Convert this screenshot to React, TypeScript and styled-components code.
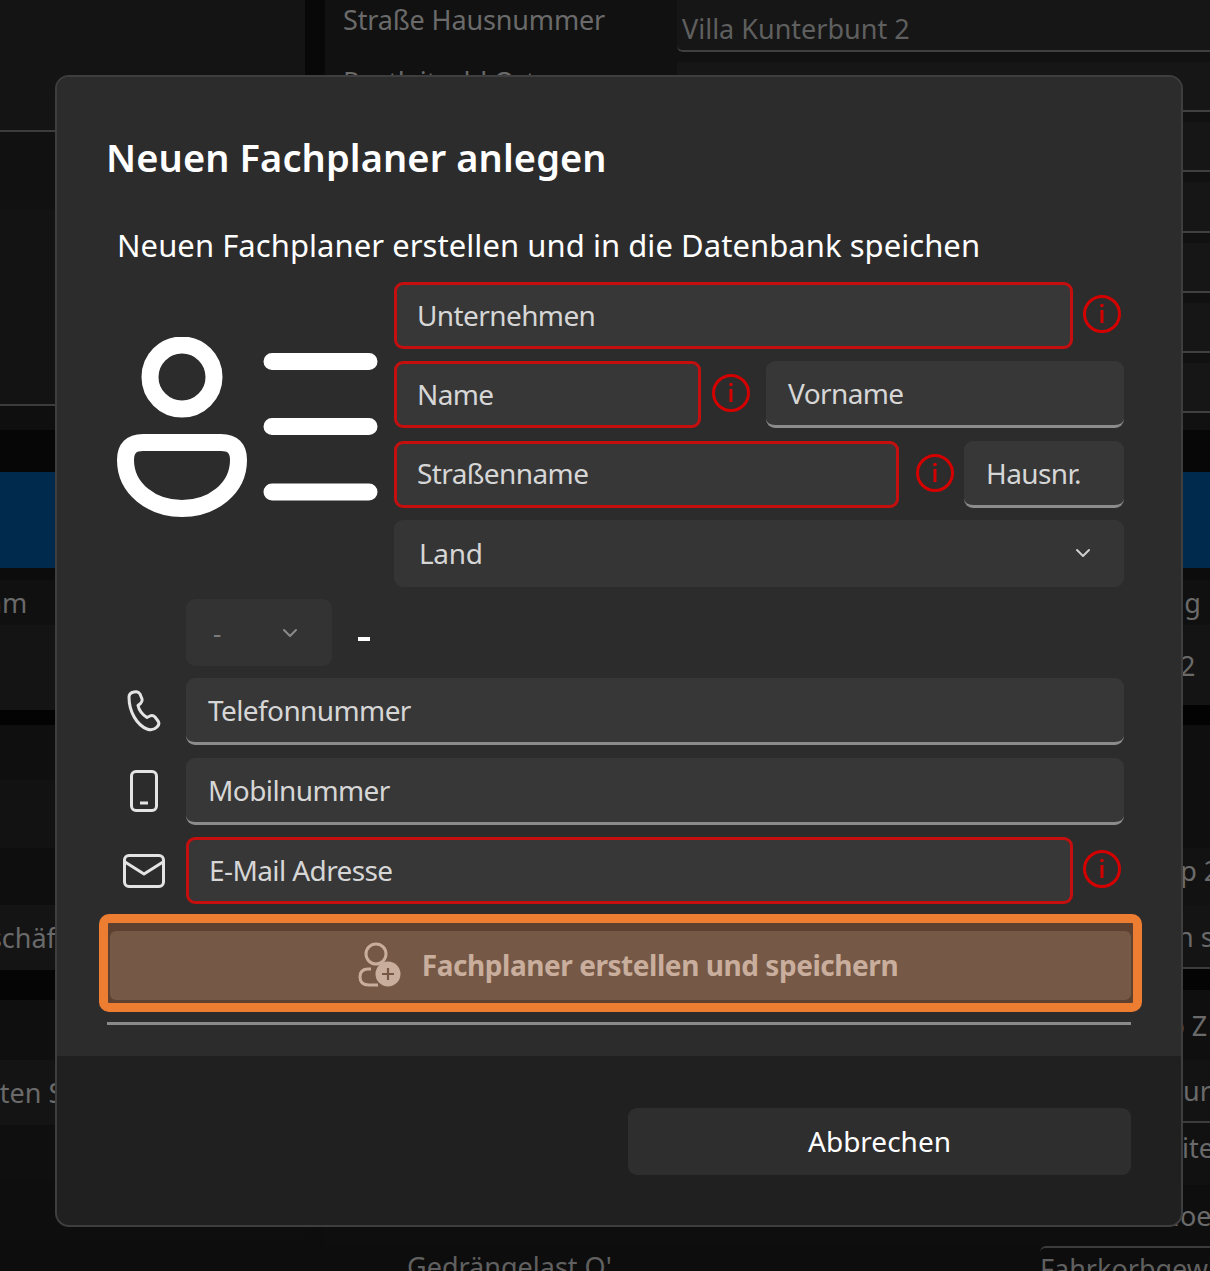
import React from 'react';
import styled, { createGlobalStyle } from 'styled-components';
import { ChevronDown } from 'lucide-react';

const GlobalStyle = createGlobalStyle`
  html, body {
    margin: 0;
    padding: 0;
    background: #0d0d0d;
  }
  * {
    box-sizing: border-box;
  }
`;

interface RowData {
  height: number;
  tone: string;
  text?: string;
  indent?: number;
  line?: boolean;
}

const leftRows: RowData[] = [
  { height: 132, tone: '#141414', line: true },
  { height: 78, tone: '#111111' },
  { height: 196, tone: '#131313', line: true },
  { height: 24, tone: '#0f0f0f' },
  { height: 42, tone: '#060606' },
  { height: 96, tone: '#002a4d' },
  { height: 12, tone: '#0c0c0c' },
  { height: 45, tone: '#101010', text: 'Programm', indent: 91 },
  { height: 85, tone: '#141414' },
  { height: 15, tone: '#030303' },
  { height: 55, tone: '#0f0f0f' },
  { height: 68, tone: '#121212' },
  { height: 57, tone: '#0e0e0e' },
  { height: 65, tone: '#141414', text: 'Geschäftsbereich', indent: 154 },
  { height: 30, tone: '#050505' },
  { height: 60, tone: '#0f0f0f' },
  { height: 65, tone: '#141414', text: 'Daten Stand', indent: 165 },
  { height: 55, tone: '#0f0f0f' },
  { height: 60, tone: '#0e0e0e' },
  { height: 31, tone: '#0d0d0d' },
];

const rightRows: RowData[] = [
  { height: 42, tone: '#070707' },
  { height: 96, tone: '#002a4d' },
  { height: 12, tone: '#0c0c0c' },
  { height: 45, tone: '#101010', text: 'Steuerung', indent: 743 },
  { height: 80, tone: '#141414', text: '2', indent: 855 },
  { height: 20, tone: '#030303' },
  { height: 123, tone: '#0f0f0f' },
  { height: 44, tone: '#121212', text: 'Typ 2', indent: 827 },
  { height: 13, tone: '#121212' },
  { height: 64, tone: '#141414', text: 'in s', indent: 845, line: true },
  { height: 21, tone: '#040404' },
  { height: 70, tone: '#0f0f0f', text: 'Typ Z', indent: 815 },
  { height: 63, tone: '#131313', text: 'Flur', indent: 837, line: true },
  { height: 48, tone: '#111111', text: 'Seite', indent: 827 },
  { height: 14, tone: '#111111' },
  { height: 61, tone: '#0e0e0e', text: 'Hoe', indent: 835 },
];

const labelRows = ['Straße Hausnummer', 'Postleitzahl Ort', '', '', '', '', ''];

const InfoIcon = ({ before, after = 0 }: { before: number; after?: number }) => (
  <InfoSvg viewBox="0 0 40 40" width="40" height="40" $before={before} $after={after}>
    <circle cx="20" cy="20" r="17.5" fill="none" stroke="#d40000" strokeWidth="3" />
    <circle cx="20" cy="11.5" r="1.8" fill="#d40000" />
    <path d="M20 16v13" stroke="#d40000" strokeWidth="3" fill="none" />
  </InfoSvg>
);

const PersonListIcon = () => (
  <svg viewBox="0 0 261 180" width="261" height="180" fill="none" stroke="#fff" strokeWidth="17" strokeLinecap="round">
    <circle cx="65" cy="40" r="32" />
    <path d="M26 105.5H104Q121.5 105.5 121.5 123C121.5 152 95 171.5 65 171.5C35 171.5 8.5 152 8.5 123Q8.5 105.5 26 105.5Z" />
    <path d="M155 24.5H252M155 89.5H252M155 155H252" />
  </svg>
);

const PhoneIcon = () => (
  <svg viewBox="0 0 36 44" width="36" height="44" fill="none" stroke="#e4e4e4" strokeWidth="3" strokeLinejoin="round">
    <path d="M3 7C3 4 5 2.5 8 2L10 1.7C12 1.5 13 2.5 14 4L16 9C16.5 11 16 12 14.5 13.5L12 15.5C13 20 17 25 21 27.5L24 26C26 25 27.5 25.5 29 27L32 31C33.5 33 33 35 31 37C28 40 25 40.5 21 39C11 35 3 22 3 7Z" />
  </svg>
);

const MobileIcon = () => (
  <svg viewBox="0 0 30 44" width="30" height="44" fill="none" stroke="#e4e4e4" strokeWidth="3">
    <rect x="2.5" y="2.5" width="25" height="39" rx="4.5" />
    <path d="M11 34H19" />
  </svg>
);

const MailIcon = () => (
  <svg viewBox="0 0 44 36" width="44" height="36" fill="none" stroke="#e4e4e4" strokeWidth="3" strokeLinejoin="round">
    <rect x="2.5" y="2.5" width="39" height="31" rx="4.5" />
    <path d="M3 9L22 21L41 9" />
  </svg>
);

const AddPersonIcon = () => (
  <svg viewBox="0 0 44 46" width="44" height="46" fill="none" stroke="#c9ae9d" strokeWidth="3">
    <circle cx="18" cy="12" r="10" />
    <path d="M13 27H10Q2 27 2 35Q2 43 11 43H20" />
    <circle cx="30" cy="32" r="12.5" fill="#c9ae9d" stroke="none" />
    <path d="M30 26V38M24 32H36" stroke="#755846" strokeWidth="2.2" />
  </svg>
);

export default function App() {
  return (
    <Page>
      <GlobalStyle />
      <Backdrop>
        <LeftPane>
          {leftRows.map((row, i) => (
            <BackRow key={i} $height={row.height} $tone={row.tone} $line={row.line} $indent={row.indent}>
              {row.text}
            </BackRow>
          ))}
        </LeftPane>
        <Gutter />
        <RightPane>
          <FormRows>
            {labelRows.map((label, i) => (
              <FormRow key={i}>
                <FormLabel>{label}</FormLabel>
                <ValueBox>{i === 0 ? 'Villa Kunterbunt 2' : ''}</ValueBox>
              </FormRow>
            ))}
          </FormRows>
          {rightRows.map((row, i) => (
            <BackRow key={i} $height={row.height} $tone={row.tone} $line={row.line} $indent={row.indent}>
              {row.text}
            </BackRow>
          ))}
          <BottomLabels>
            <BottomLabel>Gedrängelast Q'</BottomLabel>
            <BoxedLabel>Fahrkorbgewicht</BoxedLabel>
          </BottomLabels>
        </RightPane>
      </Backdrop>

      <Modal>
        <ModalBody>
          <Title>Neuen Fachplaner anlegen</Title>
          <Subtitle>Neuen Fachplaner erstellen und in die Datenbank speichen</Subtitle>

          <TopBlock>
            <PersonColumn>
              <PersonListIcon />
            </PersonColumn>
            <FieldColumn>
              <FieldRow>
                <Field $invalid $width={679}>Unternehmen</Field>
                <InfoIcon before={9} />
              </FieldRow>
              <FieldRow>
                <Field $invalid $width={307}>Name</Field>
                <InfoIcon before={10} after={15} />
                <Field $grow>Vorname</Field>
              </FieldRow>
              <FieldRow>
                <Field $invalid $width={505}>Straßenname</Field>
                <InfoIcon before={16} after={9} />
                <Field $grow>Hausnr.</Field>
              </FieldRow>
              <Select>
                Land
                <ChevronDown size={24} color="#cfcfcf" strokeWidth={2} />
              </Select>
            </FieldColumn>
          </TopBlock>

          <ContactBlock>
            <ContactRow>
              <PrefixSelect>
                -
                <ChevronDown size={24} color="#8a8a8a" strokeWidth={2} />
              </PrefixSelect>
              <PrefixDash />
            </ContactRow>
            <ContactRow>
              <ContactIcon><PhoneIcon /></ContactIcon>
              <Field $grow>Telefonnummer</Field>
            </ContactRow>
            <ContactRow>
              <ContactIcon><MobileIcon /></ContactIcon>
              <Field $grow>Mobilnummer</Field>
            </ContactRow>
            <ContactRow>
              <ContactIcon><MailIcon /></ContactIcon>
              <Field $invalid $width={887}>E-Mail Adresse</Field>
              <InfoIcon before={9} />
            </ContactRow>
          </ContactBlock>

          <Highlight>
            <SaveButton>
              <AddPersonIcon />
              Fachplaner erstellen und speichern
            </SaveButton>
          </Highlight>
          <Separator />
        </ModalBody>
        <ModalFooter>
          <CancelButton>Abbrechen</CancelButton>
        </ModalFooter>
      </Modal>
    </Page>
  );
}

const Page = styled.div`
  position: relative;
  width: 1210px;
  height: 1271px;
  overflow: hidden;
  font-family: 'Noto Sans', 'Open Sans', sans-serif;
`;

const Backdrop = styled.div`
  display: flex;
  width: 1210px;
  height: 1271px;
  background: #0d0d0d;
  color: #6a6a6a;
  font-size: 27px;
`;

const LeftPane = styled.div`
  flex: 0 0 505px;
  margin-left: -200px;
`;

const Gutter = styled.div`
  flex: 0 0 20px;
  background: linear-gradient(#080808 0 430px, #0d0d0d 430px);
`;

const RightPane = styled.div`
  flex: 1;
  min-width: 0;
`;

const BackRow = styled.div<{ $height: number; $tone: string; $line?: boolean; $indent?: number }>`
  display: flex;
  align-items: center;
  height: ${(p) => p.$height}px;
  padding-left: ${(p) => p.$indent ?? 0}px;
  background: ${(p) => p.$tone};
  border-bottom: ${(p) => (p.$line ? '2px solid #3c3c3c' : 'none')};
  white-space: nowrap;
  overflow: hidden;
`;

const FormRows = styled.div`
  display: flex;
  flex-direction: column;
  height: 430px;
  background: #111111;
`;

const FormRow = styled.div`
  display: flex;
  flex: 0 0 60.2px;
  padding-top: 10px;
  &:first-child {
    flex-basis: 52px;
    padding-top: 0;
  }
`;

const FormLabel = styled.div`
  flex: 0 0 352px;
  padding: 2px 0 0 18px;
  line-height: 36px;
  letter-spacing: -0.15px;
  color: #6a6a6a;
  white-space: nowrap;
`;

const ValueBox = styled.div`
  flex: 1;
  padding: 11px 0 0 5px;
  line-height: 36px;
  background: #161616;
  border-bottom: 2px solid #404040;
  border-bottom-left-radius: 6px;
  color: #5f5f5f;
  white-space: nowrap;
`;

const BottomLabels = styled.div`
  display: grid;
  grid-template-columns: 633px 1fr;
  height: 25px;
  padding-left: 82px;
  color: #606060;
`;

const BottomLabel = styled.div`
  padding-top: 3px;
  line-height: 36px;
  white-space: nowrap;
`;

const BoxedLabel = styled(BottomLabel)`
  border-top: 2px solid #3c3c3c;
  border-top-left-radius: 6px;
`;

const Modal = styled.div`
  position: absolute;
  left: 55px;
  top: 75px;
  display: flex;
  flex-direction: column;
  width: 1128px;
  height: 1152px;
  overflow: hidden;
  border: 2px solid #3e3e3e;
  border-radius: 14px;
  background: #202020;
`;

const ModalBody = styled.div`
  padding: 55px 50px 31px;
  background: #2c2c2c;
`;

const Title = styled.h1`
  margin: 0 0 0 -1px;
  font-size: 38px;
  font-weight: 600;
  line-height: 50px;
  letter-spacing: 0.1px;
  color: #fff;
  white-space: nowrap;
`;

const Subtitle = styled.p`
  margin: 43px 0 17px 10px;
  font-size: 31px;
  line-height: 40px;
  letter-spacing: 0.05px;
  color: #fff;
  white-space: nowrap;
`;

const TopBlock = styled.div`
  display: flex;
  margin-left: 10px;
`;

const PersonColumn = styled.div`
  flex: 0 0 277px;
  padding-top: 55px;
  line-height: 0;
`;

const FieldColumn = styled.div`
  display: flex;
  flex-direction: column;
  gap: 12.3px;
  width: 730px;
`;

const FieldRow = styled.div`
  display: flex;
  align-items: center;
  height: 67px;
`;

const InfoSvg = styled.svg<{ $before: number; $after: number }>`
  flex: 0 0 40px;
  margin: -3px ${(p) => p.$after}px 0 ${(p) => p.$before}px;
`;

const Field = styled.div<{ $invalid?: boolean; $width?: number; $grow?: boolean }>`
  display: flex;
  align-items: center;
  flex: ${(p) => (p.$grow ? '1' : `0 0 ${p.$width}px`)};
  height: 67px;
  padding: 0 0 ${(p) => (p.$invalid ? '2px' : '0')} ${(p) => (p.$invalid ? '20px' : '22px')};
  font-size: 28px;
  letter-spacing: -0.6px;
  color: #d6d6d6;
  background: #373737;
  border-radius: 9px;
  border: ${(p) => (p.$invalid ? '3px solid #c50f0f' : 'none')};
  border-bottom: ${(p) => (p.$invalid ? '3px solid #c50f0f' : '3px solid #8c8c8c')};
  white-space: nowrap;
`;

const Select = styled.div`
  display: flex;
  align-items: center;
  justify-content: space-between;
  height: 67px;
  padding: 0 29px 0 25px;
  font-size: 28px;
  letter-spacing: -0.3px;
  color: #d6d6d6;
  background: #353535;
  border-radius: 9px;
`;

const ContactBlock = styled.div`
  display: flex;
  flex-direction: column;
  gap: 12.3px;
  margin: 12.3px 0 0 10px;
  width: 1007px;
`;

const ContactRow = styled.div`
  display: flex;
  align-items: center;
  height: 67px;
`;

const ContactIcon = styled.div`
  display: flex;
  justify-content: center;
  flex: 0 0 54px;
  margin-right: 15px;
  line-height: 0;
`;

const PrefixSelect = styled.div`
  display: flex;
  align-items: center;
  justify-content: space-between;
  width: 146px;
  height: 67px;
  margin-left: 69px;
  padding: 0 30px 0 27px;
  font-size: 26px;
  color: #7c7c7c;
  background: #333333;
  border-radius: 9px;
`;

const PrefixDash = styled.div`
  width: 12px;
  height: 4px;
  margin: 12px 0 0 26px;
  background: #fff;
`;

const Highlight = styled.div`
  height: 98px;
  margin: 10px -11px 0 -8px;
  padding: 8px 2px 3px;
  border: 9px solid #ed7d31;
  border-radius: 10px;
  background: #5e4030;
`;

const SaveButton = styled.div`
  display: flex;
  align-items: center;
  justify-content: center;
  gap: 20px;
  height: 100%;
  padding: 0 0 2px 15px;
  font-size: 28px;
  font-weight: 700;
  letter-spacing: -0.45px;
  color: #c9ae9d;
  background: #755846;
  border-radius: 6px;
  white-space: nowrap;
`;

const Separator = styled.div`
  height: 3px;
  margin-top: 10px;
  background: #8a8a8a;
`;

const ModalFooter = styled.div`
  display: flex;
  justify-content: flex-end;
  flex: 1;
  padding: 52px 50px 0 0;
`;

const CancelButton = styled.div`
  display: flex;
  align-items: center;
  justify-content: center;
  width: 503px;
  height: 67px;
  padding-bottom: 2px;
  font-size: 28px;
  color: #fff;
  background: #2e2e2e;
  border-radius: 9px;
`;
